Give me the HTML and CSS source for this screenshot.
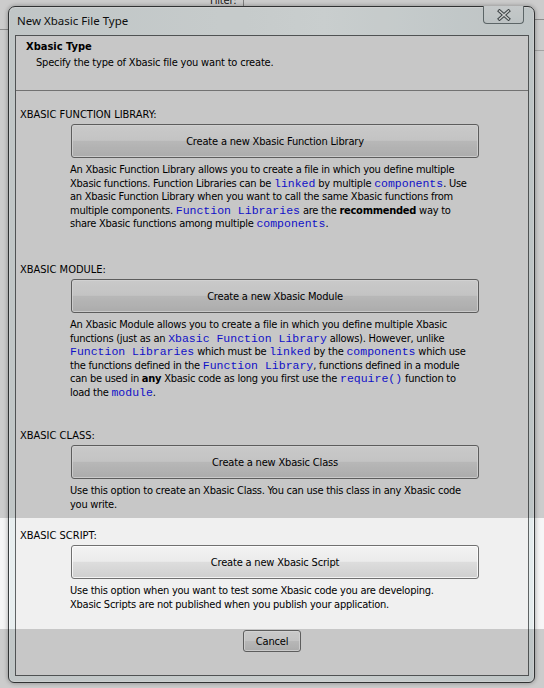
FILE: index.html
```html
<!DOCTYPE html>
<html>
<head>
<meta charset="utf-8">
<title>New Xbasic File Type</title>
<link rel="stylesheet" href="styles.css">
</head>
<body>
<div class="bg-filter">Filter:</div>
<div class="bg-vline"></div>
<div class="bg-hline bg-hline-left"></div>
<div class="bg-hline bg-hline-r1"></div>
<div class="bg-hline bg-hline-r2"></div>

<div class="desktop">
  <div class="window">
    <div class="titlebar">
      <span class="title">New Xbasic File Type</span>
      <div class="close">
        <svg width="16" height="12" viewBox="0 0 16 12">
          <path d="M3.5 2 L12.5 10 M12.5 2 L3.5 10" stroke="#4a5254" stroke-width="3.4" stroke-linecap="square" fill="none"/>
          <path d="M3.5 2 L12.5 10 M12.5 2 L3.5 10" stroke="#f4f6f6" stroke-width="1.5" stroke-linecap="square" fill="none"/>
        </svg>
      </div>
    </div>
    <div class="client">
      <div class="header">
        <div class="header-title">Xbasic Type</div>
        <div class="header-sub">Specify the type of Xbasic file you want to create.</div>
      </div>
      <div class="content">
        <div class="section section-lib">
          <div class="label">XBASIC FUNCTION LIBRARY:</div>
          <div class="btn btn-wide">Create a new Xbasic Function Library</div>
          <div class="desc">An Xbasic Function Library allows you to create a file in which you define multiple<br>Xbasic functions. Function Libraries can be <code>linked</code> by multiple <code>components</code>. Use<br>an Xbasic Function Library when you want to call the same Xbasic functions from<br>multiple components. <code>Function Libraries</code> are the <b>recommended</b> way to<br>share Xbasic functions among multiple <code>components</code>.</div>
        </div>
        <div class="section section-mod">
          <div class="label">XBASIC MODULE:</div>
          <div class="btn btn-wide">Create a new Xbasic Module</div>
          <div class="desc">An Xbasic Module allows you to create a file in which you define multiple Xbasic<br>functions (just as an <code>Xbasic Function Library</code> allows). However, unlike<br><code>Function Libraries</code> which must be <code>linked</code> by the <code>components</code> which use<br>the functions defined in the <code>Function Library</code>, functions defined in a module<br>can be used in <b>any</b> Xbasic code as long you first use the <code>require()</code> function to<br>load the <code>module</code>.</div>
        </div>
        <div class="section section-class">
          <div class="label">XBASIC CLASS:</div>
          <div class="btn btn-wide">Create a new Xbasic Class</div>
          <div class="desc">Use this option to create an Xbasic Class. You can use this class in any Xbasic code<br>you write.</div>
        </div>
        <div class="section section-script">
          <div class="label">XBASIC SCRIPT:</div>
          <div class="btn btn-wide">Create a new Xbasic Script</div>
          <div class="desc">Use this option when you want to test some Xbasic code you are developing.<br>Xbasic Scripts are not published when you publish your application.</div>
        </div>
        <div class="footer">
          <div class="btn btn-cancel">Cancel</div>
        </div>
      </div>
    </div>
  </div>
</div>

<div class="shade shade-top"></div>
<div class="shade shade-bottom"></div>
</body>
</html>
```
FILE: styles.css
```css
html, body {
  margin: 0;
  padding: 0;
}
body {
  width: 544px;
  height: 688px;
  overflow: hidden;
  position: relative;
  background: #f6f6f6;
  font-family: "DejaVu Sans Condensed", "DejaVu Sans", sans-serif;
  font-size: 11px;
  letter-spacing: -0.18px;
  color: #000;
}

/* background application behind the dialog */
.bg-filter {
  position: absolute;
  left: 210px;
  top: -5px;
  font-size: 11px;
  line-height: 12px;
  color: #222;
}
.bg-vline {
  position: absolute;
  left: 243px;
  top: 0;
  width: 1px;
  height: 8px;
  background: #9a9a9a;
}
.bg-hline {
  position: absolute;
  height: 1px;
  background: #a8a8a8;
}
.bg-hline-left { left: 0; top: 29px; width: 10px; }
.bg-hline-r1 { left: 534px; top: 19px; width: 10px; }
.bg-hline-r2 { left: 534px; top: 50px; width: 10px; background: #c4c4c4; }

.desktop {
  padding: 6px 0 0 8px;
}

.window {
  position: relative;
  box-sizing: border-box;
  width: 527px;
  height: 677px;
  border: 1px solid #3a3d3e;
  border-radius: 7px 7px 6px 6px;
  background: linear-gradient(90deg, #e7eeef 0%, #eef4f4 40%, #f2f8f8 60%, #e4eced 100%);
  box-shadow: 0 0 5px rgba(0, 0, 0, 0.35), inset 0 0 0 1px rgba(255, 255, 255, 0.6);
  padding: 0 5px 6px 6px;
  display: flex;
  flex-direction: column;
}

.titlebar {
  height: 28px;
  display: flex;
  justify-content: space-between;
  align-items: flex-start;
  padding-left: 2px;
}
.title {
  font-family: "Noto Sans", "Open Sans", sans-serif;
  font-size: 11.5px;
  letter-spacing: 0;
  line-height: 14px;
  margin-top: 7px;
  color: #111;
}
.close {
  width: 41px;
  height: 18px;
  margin-right: 5px;
  margin-top: -1px;
  box-sizing: border-box;
  border: 1px solid #6f7a7c;
  border-top: none;
  border-radius: 0 0 4px 4px;
  background: linear-gradient(#edf2f3, #e3eaeb);
  display: flex;
  align-items: center;
  justify-content: center;
}

.client {
  flex: 1;
  border: 1px solid #5f6364;
  background: #f0f0f0;
  display: flex;
  flex-direction: column;
}

.header {
  height: 55px;
  box-sizing: border-box;
  border-bottom: 1px solid #8a8a8a;
  padding: 4px 0 0 10px;
}
.header-title {
  font-weight: bold;
  letter-spacing: 0;
  line-height: 14px;
}
.header-sub {
  line-height: 14px;
  margin-top: 2px;
  padding-left: 10px;
}

.content {
  padding: 17px 0 0 4px;
}

.section-lib { height: 155px; }
.section-mod { height: 166px; }
.section-class { height: 100px; }
.section-script { height: 100px; }

.label {
  line-height: 14px;
  letter-spacing: 0;
}

.btn {
  box-sizing: border-box;
  border: 1px solid #707070;
  border-radius: 3px;
  background: linear-gradient(#f3f3f3 0%, #ebebeb 48%, #dddddd 50%, #cfcfcf 100%);
  box-shadow: inset 0 0 0 1px rgba(255, 255, 255, 0.75);
  display: flex;
  align-items: center;
  justify-content: center;
  color: #000;
}
.btn-wide {
  width: 408px;
  height: 34px;
  margin: 2px 0 0 51px;
}

.desc {
  margin: 5px 0 0 50px;
  line-height: 13.5px;
  letter-spacing: -0.25px;
  white-space: nowrap;
}
.desc code {
  font-family: "Liberation Mono", "Courier New", monospace;
  font-size: 11.5px;
  letter-spacing: 0;
  color: #1414f0;
}
.desc b {
  font-weight: bold;
}

.footer {
  display: flex;
  justify-content: center;
  padding-right: 4px;
}
.btn-cancel {
  width: 58px;
  height: 22px;
  margin-top: 1px;
}

/* spotlight dimming over the screenshot */
.shade {
  position: absolute;
  left: 0;
  width: 544px;
  background: rgba(0, 0, 0, 0.17);
  pointer-events: none;
}
.shade-top { top: 0; height: 518px; }
.shade-bottom { top: 629px; height: 59px; }
```
